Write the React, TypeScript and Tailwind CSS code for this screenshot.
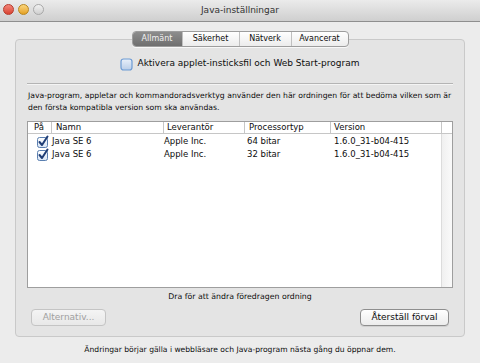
const font = { fontFamily: '"DejaVu Sans", "Liberation Sans", sans-serif' }

function Light({ color, ring }: { color: string; ring: string }) {
  return <span className={`block h-[11px] w-[11px] rounded-full border ${ring} ${color}`} />
}

function Check({ checked }: { checked?: boolean }) {
  return (
    <svg width="13" height="13" viewBox="0 0 13 13" className="shrink-0">
      <defs>
        <linearGradient id="cbg" x1="0" y1="0" x2="0" y2="1">
          <stop offset="0" stopColor="#ffffff" />
          <stop offset="1" stopColor="#d6e3f3" />
        </linearGradient>
        <linearGradient id="cbu" x1="0" y1="0" x2="0" y2="1">
          <stop offset="0" stopColor="#e9f0fa" />
          <stop offset="1" stopColor="#b9cde8" />
        </linearGradient>
      </defs>
      {checked ? (
        <>
          <rect x="1.5" y="2.5" width="10" height="10" rx="2" fill="url(#cbg)" stroke="#5a7fb0" strokeWidth="1" />
          <path d="M3.5 7 L6 10 L11.5 1.5" fill="none" stroke="#1f3d75" strokeWidth="2" strokeLinecap="round" strokeLinejoin="round" />
        </>
      ) : (
        <rect x="1" y="1" width="11" height="11" rx="2.5" fill="url(#cbu)" stroke="#6d9bd4" strokeWidth="1.2" />
      )}
    </svg>
  )
}

const cols = [
  { label: 'På', w: 'w-[23px]', pl: 'pl-[6px]' },
  { label: 'Namn', w: 'w-[112px]', pl: 'pl-[4px]' },
  { label: 'Leverantör', w: 'w-[81px]', pl: 'pl-[3px]' },
  { label: 'Processortyp', w: 'w-[86px]', pl: 'pl-[4px]' },
  { label: 'Version', w: 'w-[111px]', pl: 'pl-[3px]' },
]

const rows = [
  { name: 'Java SE 6', vendor: 'Apple Inc.', cpu: '64 bitar', version: '1.6.0_31-b04-415' },
  { name: 'Java SE 6', vendor: 'Apple Inc.', cpu: '32 bitar', version: '1.6.0_31-b04-415' },
]

export default function App() {
  return (
    <div style={font} className="flex h-[363px] w-[480px] flex-col overflow-hidden bg-[#ececec] text-[#0d0d0d]">
      <header className="relative flex h-[22px] shrink-0 items-center border-b border-[#8f8f8f] bg-gradient-to-b from-[#ebebeb] to-[#cfcfcf]">
        <div className="absolute left-[3px] top-[4px] flex gap-[4px]">
          <Light color="bg-gradient-to-b from-[#f3857a] to-[#d8402f]" ring="border-[#b53a2c]" />
          <Light color="bg-gradient-to-b from-[#fbd67a] to-[#e4a11d]" ring="border-[#b88621]" />
          <Light color="bg-gradient-to-b from-[#f2f2f2] to-[#cfcfcf]" ring="border-[#a8a8a8]" />
        </div>
        <span className="w-full text-center text-[9px] text-[#333]">Java-inställningar</span>
      </header>

      <div className="relative z-10 mt-[9px] flex justify-center">
        <div className="flex h-[16px] rounded-[4px] border border-[#9d9d9d] bg-gradient-to-b from-[#ffffff] to-[#ececec] text-[8px] leading-[14px] shadow-[0_1px_0_#f8f8f8]">
          <span className="flex w-[49px] items-center justify-center rounded-l-[3px] bg-gradient-to-b from-[#8d8d8d] to-[#6f6f6f] text-[#f2f2f2]">Allmänt</span>
          <span className="flex w-[57px] items-center justify-center border-l border-[#c0c0c0]">Säkerhet</span>
          <span className="flex w-[52px] items-center justify-center border-l border-[#c0c0c0]">Nätverk</span>
          <span className="flex w-[57px] items-center justify-center border-l border-[#c0c0c0]">Avancerat</span>
        </div>
      </div>

      <section className="mx-[15px] mt-[-8px] flex h-[298px] flex-col rounded-[4px] border border-[#c9c9c9] bg-[#e4e4e4] px-[11px] pt-[17px]">
        <label className="flex h-[14px] items-center justify-center gap-[4px] text-[9px]">
          <Check />
          <span>Aktivera applet-insticksfil och Web Start-program</span>
        </label>

        <div className="mt-[12px] h-px bg-[#b4b4b4] shadow-[0_1px_0_#f4f4f4]" />

        <p className="mt-[6px] pl-[1px] text-[7.7px] leading-[12px]">
          Java-program, appletar och kommandoradsverktyg använder den här ordningen för att bedöma vilken som är
          <br />
          den första kompatibla version som ska användas.
        </p>

        <div className="mt-[7px] flex h-[167px] flex-col border border-[#9e9e9e] bg-white text-[8.5px]">
          <div className="flex h-[12px] shrink-0 border-b border-[#c6c6c6] leading-[11px]">
            {cols.map((c, i) => (
              <span key={c.label} className={`${c.w} ${c.pl} ${i > 0 ? 'border-l border-[#c6c6c6]' : ''}`}>
                {c.label}
              </span>
            ))}
            <span className="flex-1 border-l border-[#c6c6c6]" />
          </div>
          <div className="flex flex-1">
            <div className="flex-1 pt-[1px]">
              {rows.map((r) => (
                <div key={r.cpu} className="flex h-[13px] items-center">
                  <span className="flex w-[23px] justify-end pr-[2px]"><Check checked /></span>
                  <span className="w-[112px] pl-[1px]">{r.name}</span>
                  <span className="w-[81px] pl-[1px]">{r.vendor}</span>
                  <span className="w-[86px] pl-[3px]">{r.cpu}</span>
                  <span className="w-[111px] pl-[4px]">{r.version}</span>
                </div>
              ))}
            </div>
            <div className="w-[12px] border-l border-[#dcdcdc] bg-gradient-to-r from-[#f0f0f0] to-[#fafafa]" />
          </div>
        </div>

        <p className="mt-[3px] text-center text-[7.8px] leading-[12px]">Dra för att ändra föredragen ordning</p>

        <div className="mt-[6px] flex justify-between px-[4px] text-[9px]">
          <button className="h-[17px] w-[75px] rounded-[4px] border border-[#c4c4c4] bg-gradient-to-b from-[#f4f4f4] to-[#e8e8e8] text-[#a0a0a0]">
            Alternativ...
          </button>
          <button className="h-[17px] w-[89px] rounded-[4px] border border-[#8e8e8e] bg-gradient-to-b from-[#ffffff] to-[#ececec] shadow-[0_1px_0_#d0d0d0]">
            Återställ förval
          </button>
        </div>
      </section>

      <p className="mt-[7px] text-center text-[7.6px] leading-[12px]">
        Ändringar börjar gälla i webbläsare och Java-program nästa gång du öppnar dem.
      </p>
    </div>
  )
}
